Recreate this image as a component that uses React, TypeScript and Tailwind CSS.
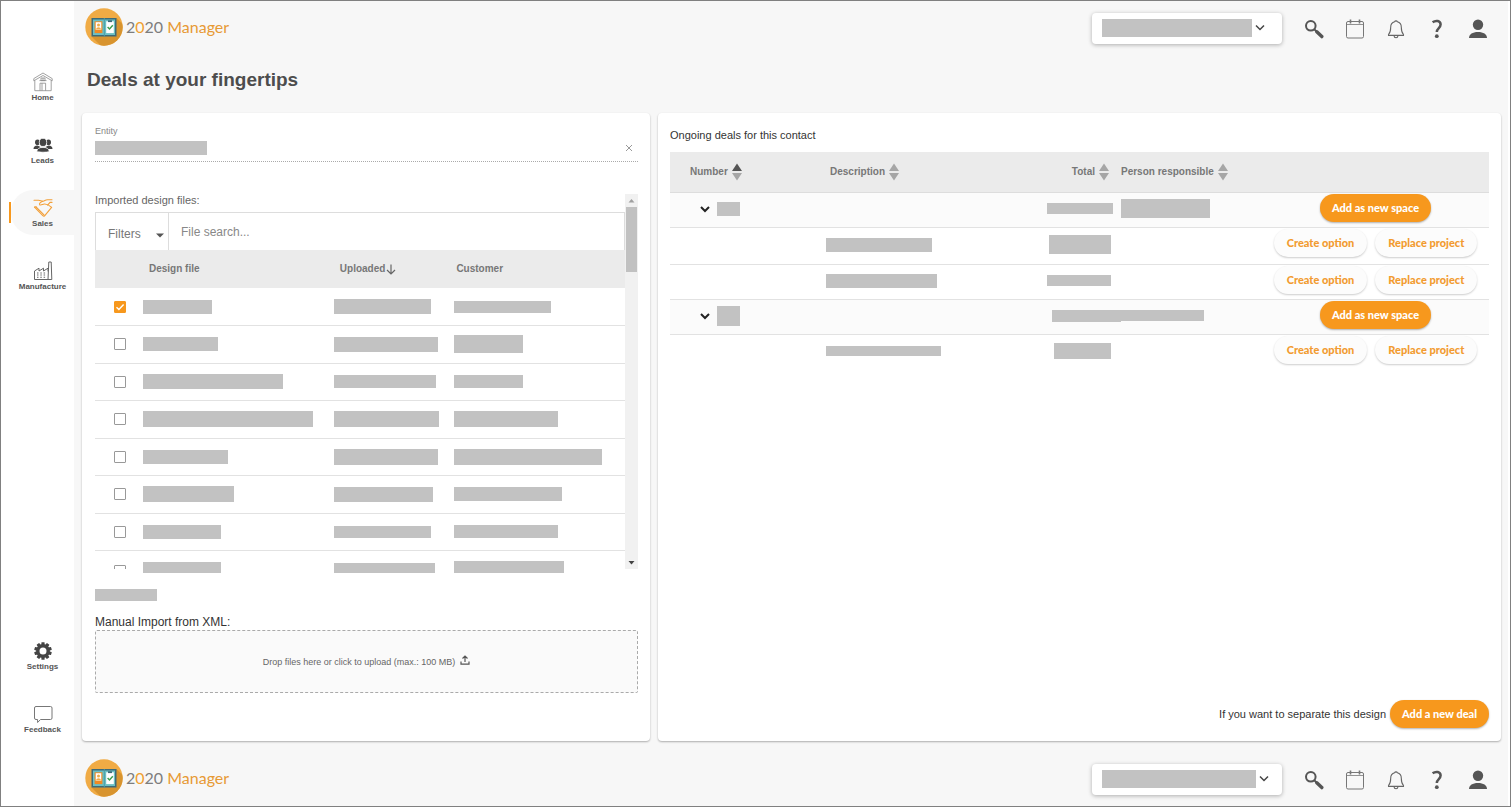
import React from "react";

type BarSize = { w: number; h: number };

function Bar({ w, h, spill }: BarSize & { spill?: boolean }) {
  return (
    <span
      className={`block shrink-0 bg-[#c2c2c2] ${spill ? "-mr-2" : ""}`}
      style={{ width: w, height: h }}
    />
  );
}

/* ---------- icons ---------- */

function HomeIcon() {
  return (
    <svg width="20" height="20" viewBox="0 0 20 20" fill="none" stroke="#8a8a8a" strokeWidth="0.8">
      <path d="M0.800 8.800V6.600L10 1l9.200 5.600v2.200L10 3.500z" />
      <path d="M1.800 8.400v10.300h16.400V8.400" />
      <path d="M7 18.700V11.200h5.600v7.500M9 11.200v7.500M8 6h4v2.600H8zM10 6v2.600M6.500 8.600h7" />
    </svg>
  );
}

function LeadsIcon() {
  return (
    <svg width="20" height="20" viewBox="0 0 20 20" fill="#444">
      <ellipse cx="4.500" cy="7.200" rx="2.500" ry="2.800" />
      <ellipse cx="15.500" cy="7.200" rx="2.500" ry="2.800" />
      <path d="M0.500 14c0-2.200 1.400-3.200 4-3.400l3 1.400-2.300 2zM19.500 14c0-2.200-1.400-3.200-4-3.400l-3 1.400 2.300 2z" />
      <ellipse cx="10" cy="7.400" rx="3.700" ry="4.100" stroke="#fff" strokeWidth="0.800" />
      <path d="M3.800 16.600c.2-2.800 2.200-4.200 6.200-4.200s6 1.400 6.200 4.200c-2 .8-10.400.8-12.400 0z" stroke="#fff" strokeWidth="0.700" />
    </svg>
  );
}

function SalesIcon() {
  return (
    <svg width="20" height="20" viewBox="0 0 20 20" fill="none" stroke="#f2a03a" strokeWidth="1.100" strokeLinejoin="round" strokeLinecap="round">
      <path d="M1 2.200h4.500c2 0 2.500 1 4 1s2.500-1.400 5-1.400H19" />
      <path d="M9.500 3.200C7.500 4.200 6 5.600 6.600 6.600c.8 1.200 3-.4 4.600-.6 2.400-.2 5.800 1.800 7.400 3.400" />
      <path d="M1.500 9.200 9.800 17.600c.8.8 1.600.6 2.200-.2l6.600-8" />
      <path d="M3 9 11 16.800" />
      <path d="M1.500 9.200c.6-.6 1.200-.6 1.700-.2M14.600 7.200 17 4.400h2" />
    </svg>
  );
}

function FactoryIcon() {
  return (
    <svg width="20" height="20" viewBox="0 0 20 20" fill="none" stroke="#666" strokeWidth="1">
      <path d="M1.500 18.500V10L6 7.200V10l4.500-2.800V10L15 7.200v3.200M1.500 18.500h17.300L18.200 1h-2.400L15 18.500" />
      <path d="M4 12h1.500M7.300 12h1.500M10.600 12h1.500M4 14h1.500M7.300 14h1.500M10.600 14h1.500M4 16.200h1.500M7.300 16.200h1.500M10.600 16.200h1.500" strokeWidth="1.100" />
    </svg>
  );
}

function GearIcon() {
  const teeth = [0, 36, 72, 108, 144, 180, 216, 252, 288, 324];
  return (
    <svg width="20" height="20" viewBox="0 0 20 20">
      {teeth.map((a) => (
        <rect key={a} x="8.400" y="1.200" width="3.200" height="4" rx="0.5" fill="#444" transform={`rotate(${a} 10 10)`} />
      ))}
      <circle cx="10" cy="10" r="5.200" fill="none" stroke="#444" strokeWidth="3.400" />
    </svg>
  );
}

function FeedbackIcon() {
  return (
    <svg width="20" height="20" viewBox="0 0 20 20" fill="none" stroke="#777" strokeWidth="1">
      <path d="M3 2.500h14.500a1.500 1.500 0 0 1 1.500 1.500v10a1.500 1.500 0 0 1-1.500 1.500H7.500L4.600 18.500v-3H3A1.500 1.500 0 0 1 1.500 14V4A1.500 1.500 0 0 1 3 2.500z" />
    </svg>
  );
}

function SearchIcon() {
  return (
    <svg width="20" height="20" viewBox="0 0 20 20" fill="none" stroke="#555">
      <circle cx="6.800" cy="6.800" r="4.800" strokeWidth="2" />
      <path d="M10.400 10.400 13 13" strokeWidth="2" />
      <path d="m12.800 12.800 5 4.800" strokeWidth="3.400" strokeLinecap="round" />
    </svg>
  );
}

function CalendarIcon() {
  return (
    <svg width="20" height="20" viewBox="0 0 20 20" fill="none" stroke="#777">
      <rect x="1.500" y="2.500" width="17" height="16.500" rx="1.500" />
      <path d="M1.500 5.500h17" strokeWidth="0.800" />
      <path d="M5.500 0.500v4M14.500 0.500v4" strokeWidth="1.600" />
    </svg>
  );
}

function BellIcon() {
  return (
    <svg width="20" height="20" viewBox="0 0 20 20" fill="none" stroke="#666" strokeWidth="1.100" strokeLinejoin="round">
      <path d="M8.600 2.800a1.500 1.500 0 0 1 2.800 0c2.500.7 3.900 2.700 3.900 5.400 0 4.300.9 5.900 2.200 7.300v.9h-15v-.9c1.300-1.400 2.200-3 2.200-7.300 0-2.700 1.400-4.700 3.900-5.400z" />
      <path d="M8 16.600c.2 2.800 3.800 2.800 4 0" />
    </svg>
  );
}

function HelpIcon() {
  return (
    <svg width="20" height="20" viewBox="0 0 20 20">
      <path d="M5.600 3.300C8.800.9 13.600 1.700 13.600 5.600c0 3.300-3.800 3.600-3.800 7.400" fill="none" stroke="#555" strokeWidth="2.500" />
      <circle cx="9.800" cy="17.200" r="1.900" fill="#555" />
    </svg>
  );
}

function UserIcon() {
  return (
    <svg width="20" height="20" viewBox="0 0 20 20" fill="#555">
      <circle cx="10" cy="5.800" r="5.200" />
      <path d="M1 19c0-3.800 3.600-6 9-6s9 2.200 9 6z" />
    </svg>
  );
}

function Chevron({ bold }: { bold?: boolean }) {
  return (
    <svg width="10" height="10" viewBox="0 0 10 10" fill="none" stroke={bold ? "#222" : "#444"} strokeWidth={bold ? 2 : 1.5}>
      <path d={bold ? "m1 3 4 4 4-4" : "m1 2.500 4 4 4-4"} />
    </svg>
  );
}

function SortIcon({ active }: { active?: boolean }) {
  return (
    <svg width="10" height="18" viewBox="0 0 10 18">
      <path d="M5 0.500 10 8H0z" fill={active ? "#555" : "#a6a6a6"} />
      <path d="M5 17.500 10 10H0z" fill="#a6a6a6" />
    </svg>
  );
}

function LogoMark() {
  return (
    <svg width="38" height="38" viewBox="0 0 38 38">
      <defs>
        <clipPath id="disc">
          <circle cx="19" cy="19" r="18.700" />
        </clipPath>
      </defs>
      <g clipPath="url(#disc)">
        <rect width="38" height="38" fill="#f0ab45" />
        <path d="M6.500 28.500 31.500 10l10 10v20H18z" fill="#d8942f" />
        <rect x="6.500" y="10" width="25" height="18.500" fill="#3d6a78" />
        <rect x="8" y="11.500" width="22" height="15.500" fill="#6cc0c4" />
        <path d="M18.800 10h1v18.500h-1z" fill="#4a9da6" />
        <rect x="9.600" y="13.300" width="7.800" height="11.800" fill="#f08a24" />
        <rect x="10.700" y="14.200" width="5.600" height="7.600" fill="#fff" />
        <circle cx="13.500" cy="17" r="1.500" fill="#f0ab45" />
        <path d="M11 21.500c.3-3 4.700-3 5 0z" fill="#f0ab45" />
        <rect x="21.200" y="13.300" width="7.600" height="11.800" fill="#fff" />
        <rect x="23" y="12.300" width="4" height="1.800" fill="#3d6a78" />
        <path d="m22.600 19 1.900 2 3.300-3.800" fill="none" stroke="#3a9b4b" strokeWidth="1.400" />
      </g>
    </svg>
  );
}

/* ---------- shell ---------- */

function TopBar({ accountWidth }: { accountWidth: number }) {
  const tools = [
    { name: "Search", icon: <SearchIcon /> },
    { name: "Calendar", icon: <CalendarIcon /> },
    { name: "Notifications", icon: <BellIcon /> },
    { name: "Help", icon: <HelpIcon /> },
    { name: "Account", icon: <UserIcon /> },
  ];
  return (
    <div className="flex h-[54px] items-center justify-between pr-[18px] pl-[11px]">
      <a href="#" className="flex items-center gap-[3px] pb-0.5">
        <LogoMark />
        <span className="font-['Lato'] text-[16px] leading-5 text-[#7d7d7d]">
          2<span className="text-[#f0a030]">0</span>20 <span className="text-[#e79a35]">Manager</span>
        </span>
      </a>
      <div className="flex items-center">
        <button
          type="button"
          aria-label="Choose account"
          className="mr-5 flex h-[31px] w-[190px] items-center gap-[3px] rounded-[4px] bg-white pl-2.5 shadow-[0_1px_4px_rgba(0,0,0,0.3)]"
        >
          <Bar w={accountWidth} h={18} />
          <Chevron />
        </button>
        <div className="flex gap-[17px] pt-0.5">
          {tools.map((t) => (
            <button key={t.name} type="button" aria-label={t.name} className="flex w-6 justify-center">
              {t.icon}
            </button>
          ))}
        </div>
      </div>
    </div>
  );
}

function NavItem({ label, icon, active }: { label: string; icon: React.ReactNode; active?: boolean }) {
  return (
    <a href="#" className="flex h-[45px] items-center pl-2">
      <span className={`h-[21px] w-[2px] ${active ? "bg-[#f7981d]" : ""}`} />
      <span
        className={`flex h-full flex-1 flex-col items-center rounded-l-[22px] pt-2 text-[8px] leading-3 font-bold text-[#555] ${
          active ? "bg-[#f7f7f7]" : ""
        }`}
      >
        {icon}
        {label}
      </span>
    </a>
  );
}

/* ---------- import panel ---------- */

const designFiles: { file: BarSize; uploaded: BarSize; customer: BarSize }[] = [
  { file: { w: 69, h: 14 }, uploaded: { w: 97, h: 15 }, customer: { w: 97, h: 12 } },
  { file: { w: 75, h: 14 }, uploaded: { w: 104, h: 15 }, customer: { w: 69, h: 18 } },
  { file: { w: 140, h: 15 }, uploaded: { w: 102, h: 13 }, customer: { w: 69, h: 13 } },
  { file: { w: 170, h: 16 }, uploaded: { w: 105, h: 16 }, customer: { w: 104, h: 16 } },
  { file: { w: 85, h: 14 }, uploaded: { w: 104, h: 16 }, customer: { w: 148, h: 16 } },
  { file: { w: 91, h: 16 }, uploaded: { w: 99, h: 15 }, customer: { w: 108, h: 14 } },
  { file: { w: 78, h: 14 }, uploaded: { w: 97, h: 12 }, customer: { w: 104, h: 13 } },
];

const checkClass =
  "block size-3 appearance-none rounded-[1px] border border-[#999] bg-white checked:border-[#f7981d] checked:bg-[#f7981d]";

function ImportPanel() {
  return (
    <section className="flex flex-col rounded-[4px] bg-white pt-3 pr-3 pb-12 pl-[13px] shadow-[0_1px_2px_rgba(0,0,0,0.3)]">
      <div className="border-b border-dotted border-[#aaa] pb-[6px]">
        <div className="text-[9px] leading-3 text-[#888]">Entity</div>
        <div className="mt-1 flex h-[14px] items-center justify-between">
          <Bar w={112} h={14} />
          <button type="button" aria-label="Clear entity" className="px-[5px]">
            <svg width="8" height="8" viewBox="0 0 8 8" stroke="#999" strokeWidth="1">
              <path d="m1 1 6 6M7 1 1 7" />
            </svg>
          </button>
        </div>
      </div>

      <div className="mt-8 flex h-[375px]">
        <div className="min-w-0 flex-1">
          <div className="text-[11px] leading-3 text-[#666]">Imported design files:</div>
          <div className="mt-1.5 flex h-[38px] border border-b-0 border-[#ddd] text-[12px] text-[#777]">
            <div className="relative w-[73px] border-r border-[#ddd]">
              <select aria-label="Filters" className="h-full w-full appearance-none bg-transparent pt-1 pl-3">
                <option>Filters</option>
              </select>
              <svg className="pointer-events-none absolute top-5 right-1" width="8" height="5" viewBox="0 0 8 5">
                <path d="M0 .5h8L4 4.500z" fill="#555" />
              </svg>
            </div>
            <input
              type="text"
              aria-label="File search"
              placeholder="File search..."
              className="min-w-0 flex-1 pl-3 placeholder:text-[#888]"
            />
          </div>
          <table className="h-[325px] w-full table-fixed text-left">
            <colgroup>
              <col className="w-12" />
              <col className="w-[36%]" />
              <col className="w-[22%]" />
              <col />
            </colgroup>
            <thead>
              <tr className="h-[38px] bg-[#ebebeb] text-[10px] leading-3 text-[#777]">
                <th />
                <th className="pl-1.5">Design file</th>
                <th className="pl-1.5">
                  <span className="flex items-center gap-px">
                    Uploaded
                    <svg width="10" height="11" viewBox="0 0 10 11" fill="none" stroke="#666" strokeWidth="1.200">
                      <path d="M5 .5v9.500M1 6l4 4 4-4" />
                    </svg>
                  </span>
                </th>
                <th className="pl-1.5">Customer</th>
              </tr>
            </thead>
            <tbody>
              {designFiles.map((f, i) => (
                <tr key={i} className="h-[37px] border-b border-[#e2e2e2]">
                  <td className="pl-[19px]">
                    <span className="relative block size-3">
                      <input type="checkbox" defaultChecked={i === 0} aria-label={`Design file ${i + 1}`} className={`peer ${checkClass}`} />
                      <svg className="pointer-events-none absolute inset-0 hidden peer-checked:block" width="12" height="12" viewBox="0 0 12 12" fill="none" stroke="#fff" strokeWidth="1.400">
                        <path d="m2.500 6.200 2.400 2.400 4.700-5" />
                      </svg>
                    </span>
                  </td>
                  <td><Bar {...f.file} /></td>
                  <td><Bar {...f.uploaded} /></td>
                  <td className="pl-1"><Bar {...f.customer} /></td>
                </tr>
              ))}
              <tr className="h-6 align-bottom">
                <td className="pb-1.5 pl-[19px]">
                  <span className="block h-1 overflow-hidden">
                    <input type="checkbox" aria-label="Design file 8" className={checkClass} />
                  </span>
                </td>
                <td className="pb-0.5"><Bar w={78} h={11} /></td>
                <td className="pb-0.5"><Bar w={101} h={10} /></td>
                <td className="pb-0.5 pl-1"><Bar w={110} h={12} /></td>
              </tr>
            </tbody>
          </table>
        </div>
        <div className="flex w-[13px] flex-col items-center bg-[#f1f1f1]">
          <svg width="13" height="13" viewBox="0 0 13 13">
            <path d="M3.500 8.500h6l-3-3.500z" fill="#a0a0a0" />
          </svg>
          <span className="h-[65px] w-[11px] bg-[#c1c1c1]" />
          <svg className="mt-auto" width="13" height="13" viewBox="0 0 13 13">
            <path d="M3.500 5h6l-3 3.500z" fill="#444" />
          </svg>
        </div>
      </div>

      <div className="mt-5">
        <Bar w={62} h={12} />
      </div>
      <div className="mt-[13px] text-[12px] leading-4 text-[#333]">Manual Import from XML:</div>
      <label className="flex h-[63px] cursor-pointer items-center justify-center gap-[5px] rounded-[2px] border border-dashed border-[#aaa] bg-[#fafafa] text-[9px] leading-3 text-[#666]">
        <input type="file" className="sr-only" />
        Drop files here or click to upload (max.: 100 MB)
        <svg className="mb-1" width="10" height="10" viewBox="0 0 10 10" fill="none" stroke="#555" strokeWidth="1.200">
          <path d="M5 7V1M2.500 3.500 5 1l2.500 2.500M1 6.500v2.700h8V6.500" />
        </svg>
      </label>
    </section>
  );
}

/* ---------- deals panel ---------- */

function PrimaryButton({ children }: { children: React.ReactNode }) {
  return (
    <button type="button" className="h-7 rounded-full bg-[#f7981d] px-3 font-['Lato'] text-[11px] leading-4 font-black text-white shadow-[0_1px_2px_rgba(0,0,0,0.3)]">
      {children}
    </button>
  );
}

function SecondaryButton({ children }: { children: React.ReactNode }) {
  return (
    <button type="button" className="h-7 rounded-full bg-[#fcfcfc] px-[13px] font-['Lato'] text-[11px] leading-4 font-black text-[#f29b30] shadow-[0_1px_2px_rgba(0,0,0,0.2)]">
      {children}
    </button>
  );
}

function GroupRow({ number, total, person, spill }: { number: BarSize; total: BarSize; person: BarSize; spill?: boolean }) {
  return (
    <tr className="h-[35px] border-b border-[#e2e2e2] bg-[#fbfbfb]">
      <td className="pb-0.5 pl-[30px]">
        <span className="flex items-center gap-[7px]">
          <button type="button" aria-label="Collapse deal">
            <Chevron bold />
          </button>
          <Bar {...number} />
        </span>
      </td>
      <td />
      <td className="pb-0.5"><span className="flex justify-end"><Bar {...total} spill={spill} /></span></td>
      <td className="pb-0.5 pl-2"><Bar {...person} /></td>
      <td className="align-top">
        <span className="flex justify-center pt-px">
          <PrimaryButton>Add as new space</PrimaryButton>
        </span>
      </td>
    </tr>
  );
}

function ProjectRow({ description, total, className }: { description: BarSize; total: BarSize; className: string }) {
  return (
    <tr className={className}>
      <td />
      <td className="pb-0.5 pl-1"><Bar {...description} /></td>
      <td className="pr-0.5 pb-0.5"><span className="flex justify-end"><Bar {...total} /></span></td>
      <td />
      <td className="align-top">
        <span className="flex justify-center gap-2 pt-px">
          <SecondaryButton>Create option</SecondaryButton>
          <SecondaryButton>Replace project</SecondaryButton>
        </span>
      </td>
    </tr>
  );
}

function DealsPanel() {
  return (
    <section className="flex flex-col rounded-[4px] bg-white px-3 pt-[15px] pb-[13px] shadow-[0_1px_2px_rgba(0,0,0,0.3)]">
      <h2 className="text-[11px] leading-[14px] text-[#333]">Ongoing deals for this contact</h2>
      <table className="mt-2.5 w-full table-fixed text-left">
        <colgroup>
          <col className="w-[152px]" />
          <col />
          <col className="w-[91px]" />
          <col className="w-[149px]" />
          <col className="w-[227px]" />
        </colgroup>
        <thead>
          <tr className="h-10 border-b border-[#ddd] bg-[#ebebeb] text-[10px] leading-3 text-[#777]">
            <th className="pl-5"><span className="flex items-center gap-1">Number <SortIcon active /></span></th>
            <th className="pl-2"><span className="flex items-center gap-1">Description <SortIcon /></span></th>
            <th><span className="flex items-center justify-end gap-1 pr-1">Total <SortIcon /></span></th>
            <th className="pl-2"><span className="flex items-center gap-1">Person responsible <SortIcon /></span></th>
            <th />
          </tr>
        </thead>
        <tbody>
          <GroupRow number={{ w: 23, h: 14 }} total={{ w: 66, h: 11 }} person={{ w: 89, h: 19 }} />
          <ProjectRow className="h-[37px] border-b border-[#e2e2e2]" description={{ w: 106, h: 14 }} total={{ w: 62, h: 19 }} />
          <ProjectRow className="h-[35px] border-b border-[#e2e2e2]" description={{ w: 111, h: 14 }} total={{ w: 64, h: 11 }} />
          <GroupRow number={{ w: 23, h: 20 }} total={{ w: 69, h: 12 }} person={{ w: 83, h: 11 }} spill />
          <ProjectRow className="h-[35px]" description={{ w: 115, h: 10 }} total={{ w: 57, h: 16 }} />
        </tbody>
      </table>
      <div className="mt-auto flex items-center justify-end gap-1">
        <span className="text-[11px] leading-[14px] text-[#333]">If you want to separate this design</span>
        <PrimaryButton>Add a new deal</PrimaryButton>
      </div>
    </section>
  );
}

export default function App() {
  return (
    <div className="flex min-h-screen border border-[#808080] bg-[#f7f7f7] font-['Liberation_Sans',Arial,sans-serif]">
      <nav className="flex w-[73px] shrink-0 flex-col justify-between bg-white pt-[63px] pb-[65px]">
        <div className="flex flex-col gap-[18px]">
          <NavItem label="Home" icon={<HomeIcon />} />
          <NavItem label="Leads" icon={<LeadsIcon />} />
          <NavItem label="Sales" icon={<SalesIcon />} active />
          <NavItem label="Manufacture" icon={<FactoryIcon />} />
        </div>
        <div className="flex flex-col gap-[18px]">
          <NavItem label="Settings" icon={<GearIcon />} />
          <NavItem label="Feedback" icon={<FeedbackIcon />} />
        </div>
      </nav>
      <div className="flex min-w-0 flex-1 flex-col border-r-2 border-white">
        <TopBar accountWidth={150} />
        <h1 className="mb-2 pl-[13px] text-[19px] leading-[50px] font-bold text-[#4d4d4d]">Deals at your fingertips</h1>
        <main className="mb-[11px] grid flex-1 grid-cols-[568fr_843fr] gap-2 pr-[7px] pl-2">
          <ImportPanel />
          <DealsPanel />
        </main>
        <TopBar accountWidth={154} />
      </div>
    </div>
  );
}
